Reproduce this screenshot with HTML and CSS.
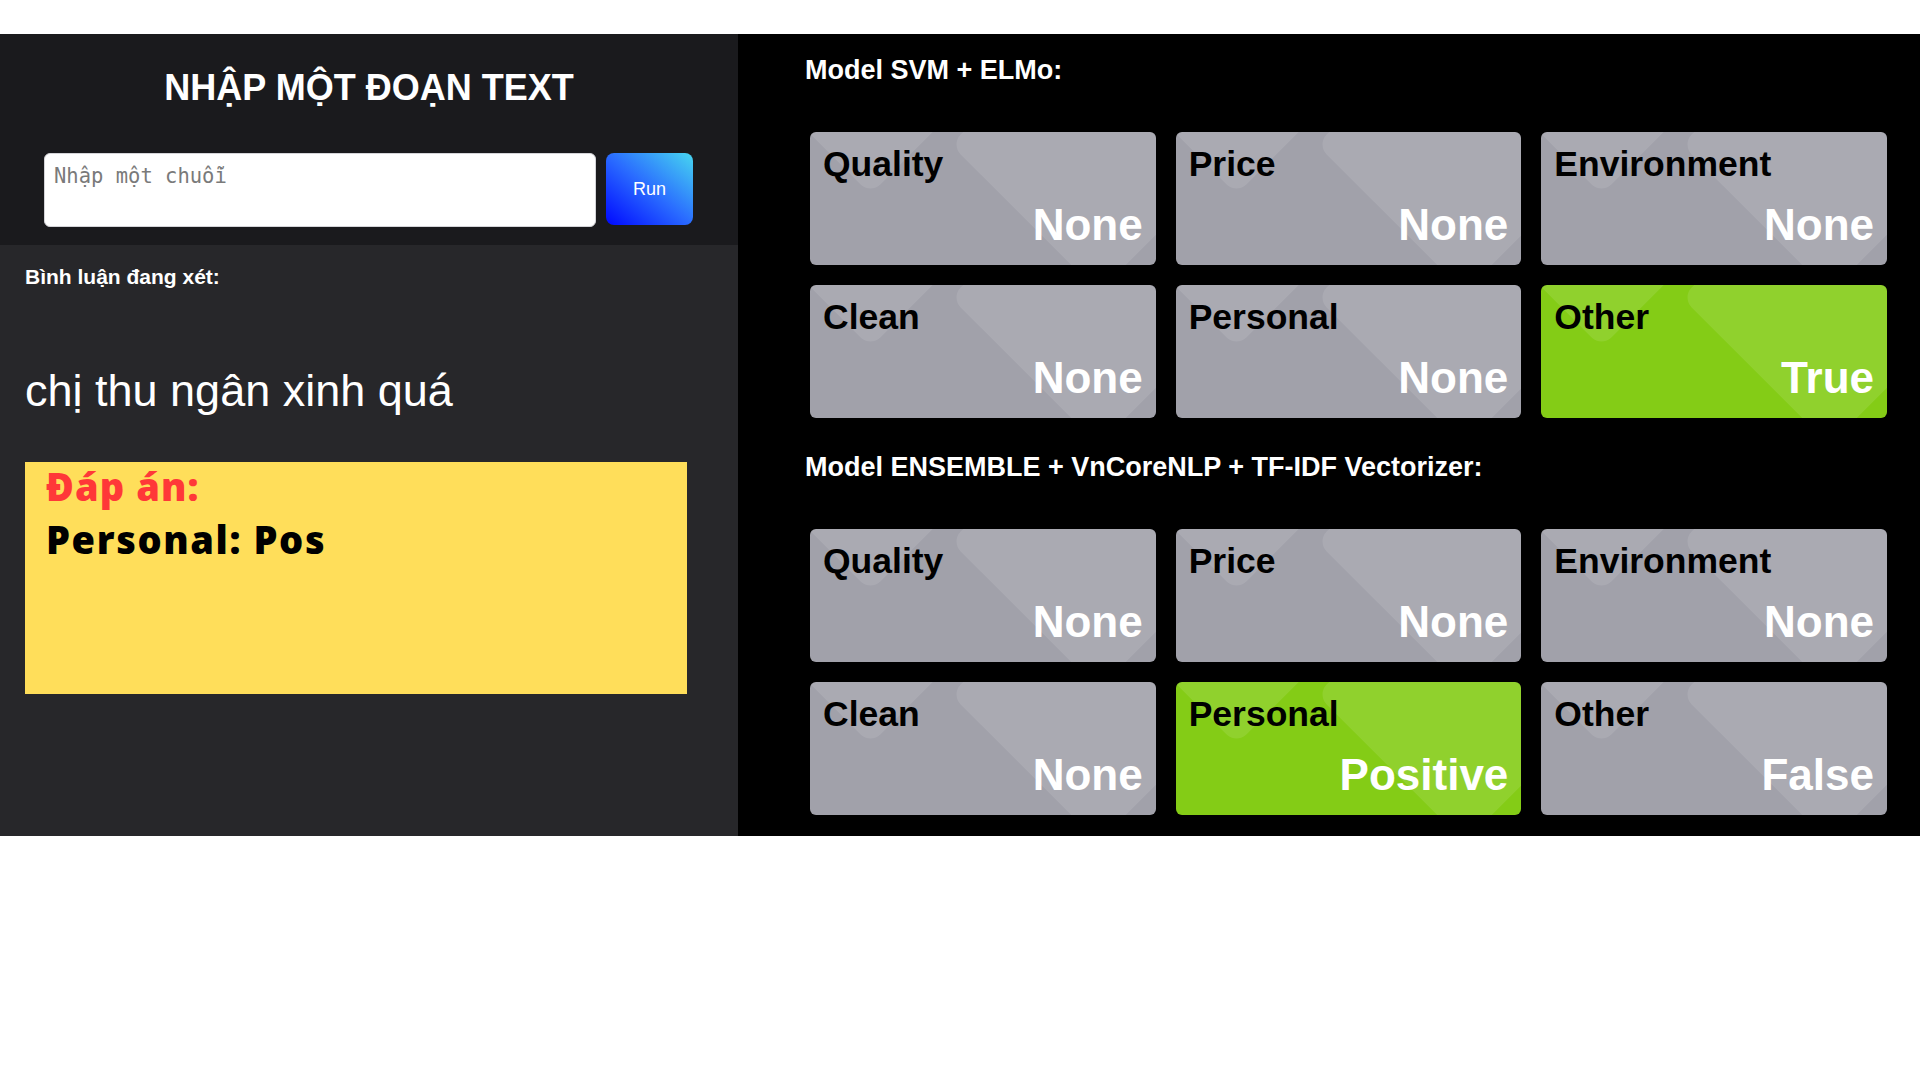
FILE: index.html
```html
<!DOCTYPE html>
<html lang="vi">
<head>
<meta charset="utf-8">
<title>Sentiment demo</title>
<link rel="stylesheet" href="styles.css">
</head>
<body>
<div class="topbar"></div>
<main class="app">
  <section class="left">
    <div class="input-area">
      <h1 class="title">NHẬP MỘT ĐOẠN TEXT</h1>
      <form class="input-row">
        <textarea class="text-input" placeholder="Nhập một chuỗi"></textarea>
        <button class="run-btn" type="button">Run</button>
      </form>
    </div>
    <div class="review">
      <h3 class="review-label">Bình luận đang xét:</h3>
      <p class="review-text">chị thu ngân xinh quá</p>
      <div class="answer">
        <div class="answer-title">Đáp án:</div>
        <div class="answer-line">Personal: Pos</div>
      </div>
    </div>
  </section>
  <section class="right">
    <h2 class="model-title">Model SVM + ELMo:</h2>
    <div class="grid">
      <div class="card"><span class="card-label">Quality</span><span class="card-value">None</span></div>
      <div class="card"><span class="card-label">Price</span><span class="card-value">None</span></div>
      <div class="card"><span class="card-label">Environment</span><span class="card-value">None</span></div>
      <div class="card"><span class="card-label">Clean</span><span class="card-value">None</span></div>
      <div class="card"><span class="card-label">Personal</span><span class="card-value">None</span></div>
      <div class="card card-on"><span class="card-label">Other</span><span class="card-value">True</span></div>
    </div>
    <h2 class="model-title second">Model ENSEMBLE + VnCoreNLP + TF-IDF Vectorizer:</h2>
    <div class="grid">
      <div class="card"><span class="card-label">Quality</span><span class="card-value">None</span></div>
      <div class="card"><span class="card-label">Price</span><span class="card-value">None</span></div>
      <div class="card"><span class="card-label">Environment</span><span class="card-value">None</span></div>
      <div class="card"><span class="card-label">Clean</span><span class="card-value">None</span></div>
      <div class="card card-on"><span class="card-label">Personal</span><span class="card-value">Positive</span></div>
      <div class="card"><span class="card-label">Other</span><span class="card-value">False</span></div>
    </div>
  </section>
</main>
</body>
</html>
```
FILE: styles.css
```css
* { box-sizing: border-box; }

html, body {
  margin: 0;
  padding: 0;
  background: #ffffff;
  font-family: "Liberation Sans", Arial, sans-serif;
}

.topbar {
  height: 34px;
  background: #ffffff;
}

.app {
  display: flex;
  height: 802px;
}

/* ---------- left column ---------- */
.left {
  width: 738px;
  flex: none;
  display: flex;
  flex-direction: column;
  background: #27272a;
}

.input-area {
  background: #1a1a1d;
  padding: 33px 0 18px;
}

.title {
  margin: 0 0 45px;
  font-size: 36px;
  line-height: 41px;
  font-weight: 700;
  color: #ffffff;
  text-align: center;
}

.input-row {
  display: flex;
  align-items: flex-start;
  gap: 10px;
  margin: 0;
  padding: 0 0 0 44px;
}

.text-input {
  width: 552px;
  height: 74px;
  resize: none;
  border: 1px solid #d4d4d8;
  border-radius: 6px;
  padding: 10px 9px;
  background: #ffffff;
  font-family: "DejaVu Sans Mono", monospace;
  font-size: 20.5px;
  color: #222;
}

.text-input::placeholder {
  color: #7a7a7a;
}

.run-btn {
  width: 87px;
  height: 72px;
  border: none;
  border-radius: 8px;
  background: linear-gradient(to top right, #0008ff 0%, #2a6cff 50%, #47d6f0 100%);
  color: #ffffff;
  font-family: "Liberation Sans", Arial, sans-serif;
  font-size: 18px;
  padding: 0;
}

.review {
  padding: 20px 25px 0;
}

.review-label {
  margin: 0;
  font-size: 21px;
  line-height: 24px;
  font-weight: 700;
  color: #ffffff;
}

.review-text {
  margin: 77px 0 0;
  font-size: 45px;
  line-height: 50px;
  color: #ffffff;
}

.answer {
  margin-top: 46px;
  width: 662px;
  height: 232px;
  background: #ffde5a;
  padding: 2px 21px;
  font-family: "Open Sans", "Noto Sans", sans-serif;
  font-weight: 800;
}

.answer-title {
  font-size: 38px;
  line-height: 44px;
  color: #ff3838;
  letter-spacing: 1.1px;
}

.answer-line {
  margin-top: 9px;
  font-size: 38px;
  line-height: 44px;
  color: #000000;
  letter-spacing: 1.6px;
}

/* ---------- right column ---------- */
.right {
  flex: 1;
  background: #000000;
  padding: 21px 33px 0 67px;
}

.model-title {
  margin: 0;
  font-size: 27px;
  line-height: 31px;
  font-weight: 700;
  color: #ffffff;
}

.model-title.second {
  margin-top: 34px;
}

.grid {
  margin: 46px 0 0 5px;
  display: grid;
  grid-template-columns: repeat(3, 1fr);
  grid-auto-rows: 133px;
  gap: 20px;
}

.card {
  position: relative;
  overflow: hidden;
  display: flex;
  flex-direction: column;
  justify-content: space-between;
  padding: 12px 13px 15px;
  border-radius: 6px;
  background: #a1a1aa;
}

.card-on {
  background: #84cc16;
}

.card::before,
.card::after {
  content: "";
  position: absolute;
  width: 209px;
  height: 209px;
  border-radius: 14px;
  background: rgba(255, 255, 255, 0.1);
  transform: rotate(45deg);
}

.card::before {
  left: -44px;
  top: -190px;
}

.card::after {
  left: 184px;
  top: -92px;
}

.card-label,
.card-value {
  position: relative;
  z-index: 1;
  font-weight: 700;
}

.card-label {
  font-size: 35.5px;
  line-height: 40px;
  color: #000000;
}

.card-value {
  align-self: flex-end;
  font-size: 44px;
  line-height: 50px;
  color: #ffffff;
}
```
